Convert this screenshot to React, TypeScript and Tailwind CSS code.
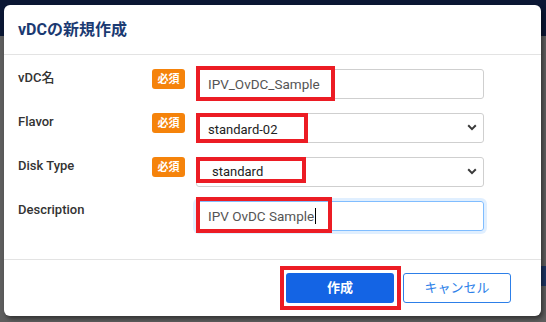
import React from "react";

const font = "font-['Roboto','Noto_Sans_CJK_JP',sans-serif]";

function Badge() {
  return (
    <span className="mt-0 flex h-[20px] w-[33px] shrink-0 items-center justify-center rounded-[3px] bg-[#f5830b] text-[11px] font-bold leading-none text-white">
      必須
    </span>
  );
}

function Chevron() {
  return (
    <svg
      className="pointer-events-none absolute right-[7px] top-[11px]"
      width="10"
      height="7"
      viewBox="0 0 10 7"
      fill="none"
    >
      <path d="M1.2 1.3 5 5.1l3.8-3.8" stroke="#3a3a3a" strokeWidth="2" />
    </svg>
  );
}

// red annotation frame drawn over a field
function Mark({ className }: { className: string }) {
  return <div className={`pointer-events-none absolute border-[4px] border-[#ec1c24] ${className}`} />;
}

export default function App() {
  return (
    <div className={`relative h-[322px] w-[546px] overflow-hidden bg-[#5e5e5e] ${font}`}>
      <div className="h-[36px] bg-[#0b1734]" />
      <div className="absolute right-0 top-[266px] h-[20px] w-[6px] bg-[#1c3463]" />

      <div className="absolute left-[4px] top-[5px] flex h-[311px] w-[537px] flex-col rounded-[6px] bg-white shadow-[2px_3px_4px_rgba(0,0,0,0.45)]">
        <div className="flex h-[50px] items-center border-b border-[#e3e3e3] px-[14px]">
          <h2 className="text-[16px] font-bold text-[#1b3a72]">vDCの新規作成</h2>
        </div>

        <div className="flex flex-col gap-[14px] pb-[28px] pl-[14px] pt-[14px]">
          <div className="flex items-start">
            <label className="w-[134px] pt-[1px] text-[13px] font-medium leading-[16px] text-[#333]">vDC名</label>
            <Badge />
            <div className="relative ml-[11px]">
              <input
                readOnly
                value="IPV_OvDC_Sample"
                className="h-[30px] w-[288px] rounded-[3px] border border-[#cfcfcf] px-[11px] text-[13.5px] text-[#555] outline-none"
              />
              <Mark className="-top-[3px] left-0 h-[35px] w-[139px]" />
            </div>
          </div>

          <div className="flex items-start">
            <label className="w-[134px] pt-[1px] text-[13px] font-medium leading-[16px] text-[#333]">Flavor</label>
            <Badge />
            <div className="relative ml-[11px]">
              <select
                defaultValue="standard-02"
                className="h-[30px] w-[288px] appearance-none rounded-[3px] border border-[#cfcfcf] bg-white px-[11px] pt-[3px] text-[13px] text-[#222] outline-none"
              >
                <option>standard-02</option>
              </select>
              <Chevron />
              <Mark className="top-0 left-0 h-[30px] w-[112px]" />
            </div>
          </div>

          <div className="flex items-start">
            <label className="w-[134px] pt-[1px] text-[13px] font-medium leading-[16px] text-[#333]">Disk Type</label>
            <Badge />
            <div className="relative ml-[11px]">
              <select
                defaultValue="standard"
                className="h-[30px] w-[288px] appearance-none rounded-[3px] border border-[#cfcfcf] bg-white px-[15px] text-[13px] text-[#222] outline-none"
              >
                <option>standard</option>
              </select>
              <Chevron />
              <Mark className="top-0 left-0 h-[26px] w-[110px]" />
            </div>
          </div>

          <div className="flex items-start">
            <label className="w-[134px] pt-[1px] text-[13px] font-medium leading-[16px] text-[#333]">Description</label>
            <div className="w-[33px] shrink-0" />
            <div className="relative ml-[11px]">
              <div className="flex h-[30px] w-[288px] items-center rounded-[3px] border border-[#80bdff] px-[11px] text-[13.5px] text-[#555] shadow-[0_0_0_3px_rgba(0,123,255,0.12)]">
                IPV OvDC Sample
                <span className="ml-px h-[16px] w-px bg-black" />
              </div>
              <Mark className="-top-[4px] left-0 h-[36px] w-[136px]" />
            </div>
          </div>
        </div>

        <div className="flex flex-1 items-start justify-end gap-[9px] border-t border-[#e3e3e3] pr-[30px] pt-[13px]">
          <div className="relative">
            <button className="h-[30px] w-[108px] rounded-[3px] bg-[#1464e4] text-[13px] font-bold text-white">
              作成
            </button>
            <Mark className="-left-[6px] -top-[7px] h-[44px] w-[121px]" />
          </div>
          <button className="h-[30px] w-[108px] rounded-[3px] border border-[#2d7fe8] bg-white text-[13px] text-[#2d7fe8]">
            キャンセル
          </button>
        </div>
      </div>
    </div>
  );
}
